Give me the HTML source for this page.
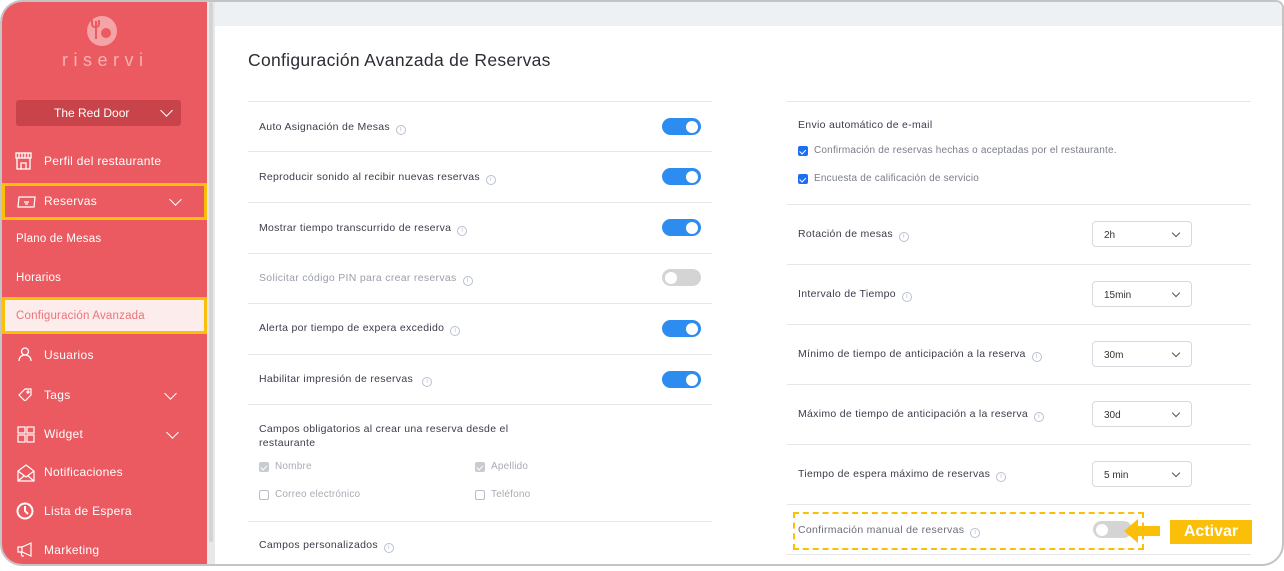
<!DOCTYPE html>
<html><head><meta charset="utf-8"><style>
*{box-sizing:border-box;margin:0;padding:0}
body{width:1284px;height:571px;background:#fff;font-family:"Liberation Sans",sans-serif;position:relative;overflow:hidden}
.frame{position:absolute;left:0;top:0;width:1284px;height:566px;border:2px solid #c4c4c4;border-radius:22px 8px 22px 22px;overflow:hidden;background:#fff}
.side{position:absolute;left:0;top:0;width:205px;height:100%;background:#EB5A60;color:#fff}
.strip{position:absolute;left:205px;top:0;width:8px;height:100%;background:#e8e8e8}
.strip i{position:absolute;left:2px;top:0;width:4px;height:540px;background:#d4d4d4;border-radius:2px}
.topband{position:absolute;left:213px;top:0;right:0;height:24px;background:#EDF1F4}
.ab{position:absolute}
.nav{position:absolute;left:42px;font-size:12px;color:#fff;letter-spacing:.3px}
.sub{position:absolute;left:14px;font-size:11.5px;color:#fff;letter-spacing:.2px}
.chev{position:absolute;width:9px;height:9px;border-right:1.6px solid #fff;border-bottom:1.6px solid #fff;transform:rotate(45deg)}
.t{position:absolute;font-size:10.5px;color:#3c3c4c;letter-spacing:.3px}
.line{position:absolute;height:1px;background:#e6e6ea}
.tg{position:absolute;width:39px;height:17px;border-radius:9px;background:#2D8CF0}
.tg:after{content:"";position:absolute;right:3px;top:2.5px;width:12px;height:12px;border-radius:50%;background:#fff}
.tg.off{background:#d4d4d4}
.tg.off:after{left:3px;right:auto}
.info{display:inline-block;width:10px;height:10px;border:1px solid #b8c0d0;border-radius:50%;margin-left:6px;vertical-align:-1px;font-size:7px;line-height:8px;text-align:center;color:#b8c0d0}
.sel{position:absolute;left:1090px;width:100px;height:26px;border:1px solid #d6d9de;border-radius:4px;font-size:10px;color:#333;padding:8px 0 0 11px}
.sel:after{content:"";position:absolute;right:12px;top:8px;width:5px;height:5px;border-right:1.3px solid #555;border-bottom:1.3px solid #555;transform:rotate(45deg)}
.cb{position:absolute;width:10px;height:10px;border-radius:2px;background:#1E6FF0}
.cb.g{background:#c8ccd2}
.cb.e{background:#fff;border:1px solid #b8bcc4}
.cb:not(.e):after{content:"";position:absolute;left:3px;top:1.5px;width:2.5px;height:4.5px;border-right:1.3px solid #fff;border-bottom:1.3px solid #fff;transform:rotate(45deg)}
.lt{position:absolute;font-size:10px;color:#a8acb4;letter-spacing:.2px}
</style></head><body>
<div class="frame">
<div class="side">
 <div class="ab" style="left:85px;top:14px;width:30px;height:30px;border-radius:50%;background:#F4A3A6"></div>
 <div class="ab" style="left:93px;top:19px;width:2px;height:18px;background:#EB5A60"></div>
 <div class="ab" style="left:89px;top:18px;width:9px;height:8px;border:2px solid #EB5A60;border-top:none;border-radius:0 0 4px 4px"></div>
 <div class="ab" style="left:99px;top:26px;width:10px;height:10px;border-radius:50%;background:#EB5A60"></div>
 <div class="ab" style="left:60px;top:48px;font-size:18px;color:#F7B0B3;letter-spacing:5.5px">riservi</div>
 <div class="ab" style="left:14px;top:98px;width:165px;height:26px;background:#C9434A;border-radius:3px;font-size:12px;color:#fff;padding:6px 0 0 38px">The Red Door</div>
 <div class="chev" style="left:160px;top:104px"></div>
 <svg class="ab" style="left:13px;top:150px" width="17" height="18" viewBox="0 0 17 18" fill="none" stroke="#fff" stroke-width="1.3"><rect x="1" y="1" width="15" height="5"/><path d="M4 1v5M7 1v5M10 1v5M13 1v5M2 6v11h13V6M6 17v-6h5v6"/></svg>
 <div class="nav" style="top:152px">Perfil del restaurante</div>
 <div class="ab" style="left:0;top:181px;width:205px;height:37px;border:3px solid #FBBF0A"></div>
 <svg class="ab" style="left:15px;top:194px" width="19" height="12" viewBox="0 0 19 12" fill="none" stroke="#fff" stroke-width="1.2"><path d="M2 1h16l-1 10H1z"/><path d="M7 6h5M8 8h3"/></svg>
 <div class="nav" style="top:192px">Reservas</div>
 <div class="chev" style="left:169px;top:193px"></div>
 <div class="sub" style="top:231px">Plano de Mesas</div>
 <div class="sub" style="top:270px">Horarios</div>
 <div class="ab" style="left:0;top:295px;width:205px;height:37px;border:3px solid #FBBF0A;background:#FDECEC"></div>
 <div class="sub" style="top:308px;color:#E8757A">Configuración Avanzada</div>
 <svg class="ab" style="left:16px;top:345px" width="14" height="15" viewBox="0 0 14 15" fill="none" stroke="#fff" stroke-width="1.3"><circle cx="7" cy="4.5" r="3.5"/><path d="M1 14c0-4 3-6 6-6s6 2 6 6"/></svg>
 <div class="nav" style="top:346px">Usuarios</div>
 <svg class="ab" style="left:16px;top:386px" width="14" height="13" viewBox="0 0 14 13" fill="none" stroke="#fff" stroke-width="1.2"><path d="M1 7l6-6h6v6l-6 6z"/><circle cx="10" cy="4" r="1"/></svg>
 <div class="nav" style="top:386px">Tags</div>
 <div class="chev" style="left:164px;top:387px"></div>
 <svg class="ab" style="left:15px;top:424px" width="18" height="17" viewBox="0 0 18 17" fill="none" stroke="#fff" stroke-width="1.2"><rect x="1" y="1" width="7" height="6"/><rect x="10" y="1" width="7" height="6"/><rect x="1" y="9" width="7" height="7"/><rect x="10" y="9" width="7" height="7"/></svg>
 <div class="nav" style="top:425px">Widget</div>
 <div class="chev" style="left:166px;top:426px"></div>
 <svg class="ab" style="left:15px;top:462px" width="18" height="18" viewBox="0 0 18 18" fill="none" stroke="#fff" stroke-width="1.2"><path d="M1 7v10h16V7L9 1z"/><path d="M1 7l8 6 8-6M1 17l6-5M17 17l-6-5"/></svg>
 <div class="nav" style="top:463px">Notificaciones</div>
 <svg class="ab" style="left:14px;top:500px" width="18" height="18" viewBox="0 0 18 18" fill="none" stroke="#fff" stroke-width="2"><circle cx="9" cy="9" r="7.5"/><path d="M9 4v5l3 3"/></svg>
 <div class="nav" style="top:502px">Lista de Espera</div>
 <svg class="ab" style="left:15px;top:540px" width="17" height="15" viewBox="0 0 17 15" fill="none" stroke="#fff" stroke-width="1.2"><path d="M1 5h4l9-4v13l-9-4H1zM5 5v5M4 10l1 4h2"/></svg>
 <div class="nav" style="top:541px">Marketing</div>
</div>
<div class="strip"><i></i></div>
<div class="topband"></div>

<div class="ab" style="left:246px;top:48px;font-size:17.5px;color:#2c2c34;letter-spacing:.3px">Configuración Avanzada de Reservas</div>

<div class="line" style="left:246px;top:99px;width:464px"></div>
<div class="t" style="left:257px;top:119px">Auto Asignación de Mesas<span class="info">i</span></div><div class="tg" style="left:660px;top:116px"></div>
<div class="line" style="left:246px;top:149px;width:464px"></div>
<div class="t" style="left:257px;top:169px">Reproducir sonido al recibir nuevas reservas<span class="info">i</span></div><div class="tg" style="left:660px;top:166px"></div>
<div class="line" style="left:246px;top:200px;width:464px"></div>
<div class="t" style="left:257px;top:220px">Mostrar tiempo transcurrido de reserva<span class="info">i</span></div><div class="tg" style="left:660px;top:217px"></div>
<div class="line" style="left:246px;top:251px;width:464px"></div>
<div class="t" style="left:257px;top:270px;color:#9a9ea8">Solicitar código PIN para crear reservas<span class="info">i</span></div><div class="tg off" style="left:660px;top:267px"></div>
<div class="line" style="left:246px;top:301px;width:464px"></div>
<div class="t" style="left:257px;top:320px">Alerta por tiempo de expera excedido<span class="info">i</span></div><div class="tg" style="left:660px;top:318px"></div>
<div class="line" style="left:246px;top:352px;width:464px"></div>
<div class="t" style="left:257px;top:371px">Habilitar impresión de reservas <span class="info">i</span></div><div class="tg" style="left:660px;top:369px"></div>
<div class="line" style="left:246px;top:402px;width:464px"></div>
<div class="t" style="left:257px;top:420px;line-height:14px">Campos obligatorios al crear una reserva desde el<br>restaurante</div>
<div class="cb g" style="left:257px;top:460px"></div><div class="lt" style="left:273px;top:459px">Nombre</div>
<div class="cb g" style="left:473px;top:460px"></div><div class="lt" style="left:489px;top:459px">Apellido</div>
<div class="cb e" style="left:257px;top:488px"></div><div class="lt" style="left:273px;top:487px">Correo electrónico</div>
<div class="cb e" style="left:473px;top:488px"></div><div class="lt" style="left:489px;top:487px">Teléfono</div>
<div class="line" style="left:246px;top:519px;width:464px"></div>
<div class="t" style="left:257px;top:537px">Campos personalizados<span class="info">i</span></div>

<div class="line" style="left:785px;top:99px;width:464px"></div>
<div class="t" style="left:796px;top:117px">Envio automático de e-mail</div>
<div class="cb" style="left:796px;top:144px"></div><div class="lt" style="left:812px;top:143px;color:#7a7e88">Confirmación de reservas hechas o aceptadas por el restaurante.</div>
<div class="cb" style="left:796px;top:172px"></div><div class="lt" style="left:812px;top:171px;color:#7a7e88">Encuesta de calificación de servicio</div>
<div class="line" style="left:785px;top:202px;width:464px"></div>
<div class="t" style="left:796px;top:226px">Rotación de mesas<span class="info">i</span></div><div class="sel" style="top:219px">2h</div>
<div class="line" style="left:785px;top:262px;width:464px"></div>
<div class="t" style="left:796px;top:286px">Intervalo de Tiempo<span class="info">i</span></div><div class="sel" style="top:279px">15min</div>
<div class="line" style="left:785px;top:322px;width:464px"></div>
<div class="t" style="left:796px;top:346px">Mínimo de tiempo de anticipación a la reserva<span class="info">i</span></div><div class="sel" style="top:339px">30m</div>
<div class="line" style="left:785px;top:382px;width:464px"></div>
<div class="t" style="left:796px;top:406px">Máximo de tiempo de anticipación a la reserva<span class="info">i</span></div><div class="sel" style="top:399px">30d</div>
<div class="line" style="left:785px;top:442px;width:464px"></div>
<div class="t" style="left:796px;top:466px">Tiempo de espera máximo de reservas<span class="info">i</span></div><div class="sel" style="top:459px">5 min</div>
<div class="line" style="left:785px;top:502px;width:464px"></div>
<div class="ab" style="left:791px;top:510px;width:351px;height:38px;border:2.5px dashed #FBBF0A"></div>
<div class="t" style="left:796px;top:522px;color:#6a6e7a">Confirmación manual de reservas<span class="info">i</span></div>
<div class="tg off" style="left:1091px;top:519px"></div>
<svg class="ab" style="left:1120px;top:515px" width="42" height="28" viewBox="0 0 42 28"><path d="M2 14L16 2v7h22v10H16v7z" fill="#FBBF0A"/></svg>
<div class="ab" style="left:1168px;top:518px;width:82px;height:24px;background:#FBBF0A;color:#fff;font-weight:bold;font-size:16px;text-align:center;padding-top:3px">Activar</div>
<div class="line" style="left:785px;top:552px;width:464px"></div>
</div>
</body></html>
